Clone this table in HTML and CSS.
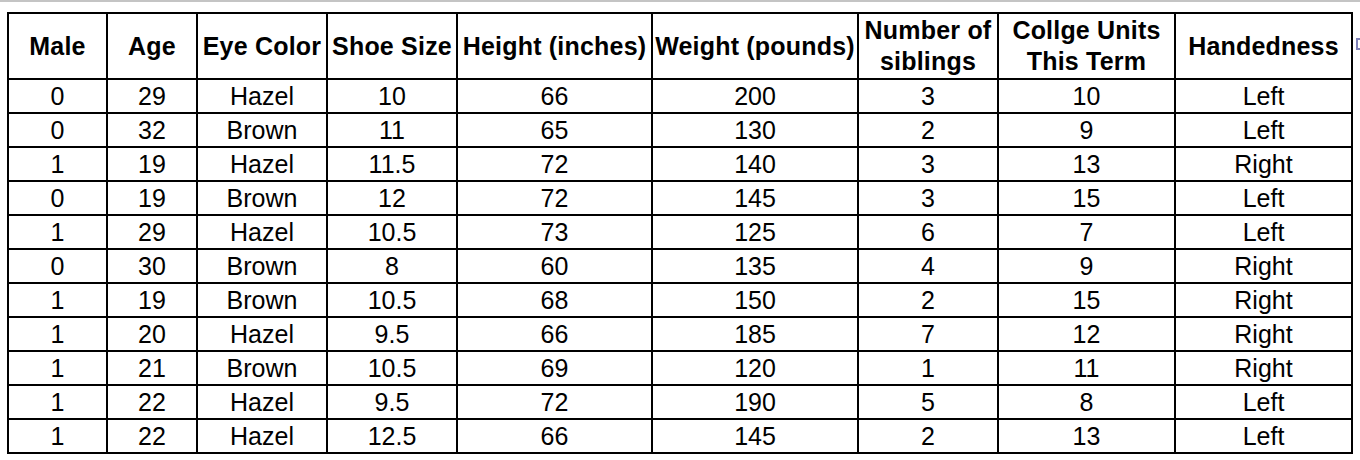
FILE: index.html
```html
<!DOCTYPE html>
<html>
<head>
<meta charset="utf-8">
<link rel="stylesheet" href="styles.css">
</head>
<body>
<div class="topbar"></div>
<div class="wrap">
<table class="data">
<colgroup>
<col class="c1"><col class="c2"><col class="c3"><col class="c4"><col class="c5"><col class="c6"><col class="c7"><col class="c8"><col class="c9">
</colgroup>
<thead>
<tr><th>Male</th><th>Age</th><th>Eye Color</th><th>Shoe Size</th><th>Height (inches)</th><th>Weight (pounds)</th><th>Number of<br>siblings</th><th>Collge Units<br>This Term</th><th>Handedness</th></tr>
</thead>
<tbody>
<tr><td>0</td><td>29</td><td>Hazel</td><td>10</td><td>66</td><td>200</td><td>3</td><td>10</td><td>Left</td></tr>
<tr><td>0</td><td>32</td><td>Brown</td><td>11</td><td>65</td><td>130</td><td>2</td><td>9</td><td>Left</td></tr>
<tr><td>1</td><td>19</td><td>Hazel</td><td>11.5</td><td>72</td><td>140</td><td>3</td><td>13</td><td>Right</td></tr>
<tr><td>0</td><td>19</td><td>Brown</td><td>12</td><td>72</td><td>145</td><td>3</td><td>15</td><td>Left</td></tr>
<tr><td>1</td><td>29</td><td>Hazel</td><td>10.5</td><td>73</td><td>125</td><td>6</td><td>7</td><td>Left</td></tr>
<tr><td>0</td><td>30</td><td>Brown</td><td>8</td><td>60</td><td>135</td><td>4</td><td>9</td><td>Right</td></tr>
<tr><td>1</td><td>19</td><td>Brown</td><td>10.5</td><td>68</td><td>150</td><td>2</td><td>15</td><td>Right</td></tr>
<tr><td>1</td><td>20</td><td>Hazel</td><td>9.5</td><td>66</td><td>185</td><td>7</td><td>12</td><td>Right</td></tr>
<tr><td>1</td><td>21</td><td>Brown</td><td>10.5</td><td>69</td><td>120</td><td>1</td><td>11</td><td>Right</td></tr>
<tr><td>1</td><td>22</td><td>Hazel</td><td>9.5</td><td>72</td><td>190</td><td>5</td><td>8</td><td>Left</td></tr>
<tr><td>1</td><td>22</td><td>Hazel</td><td>12.5</td><td>66</td><td>145</td><td>2</td><td>13</td><td>Left</td></tr>
</tbody>
</table>
<svg class="marker" width="8" height="12" viewBox="0 0 8 12"><rect x="1" y="1" width="8" height="10" fill="none" stroke="#7f82b8" stroke-width="2"/></svg>
</div>
</body>
</html>
```
FILE: styles.css
```css
html, body {
  margin: 0;
  padding: 0;
  background: #ffffff;
}
body {
  font-family: "Liberation Sans", Arial, sans-serif;
  color: #000;
  overflow: hidden;
}
.topbar {
  height: 2px;
  background: #c4c4c4;
}
.wrap {
  display: flex;
  align-items: flex-start;
  gap: 3px;
  padding: 10px 0 0 7px;
}
.data {
  border-collapse: collapse;
  table-layout: fixed;
  width: 1344px;
  flex: none;
}
.c1 { width: 99px; }
.c2 { width: 90px; }
.c3 { width: 130px; }
.c4 { width: 130px; }
.c5 { width: 195px; }
.c6 { width: 206px; }
.c7 { width: 140px; }
.c8 { width: 177px; }
.c9 { width: 177px; }
.data th, .data td {
  border: 2px solid #000;
  text-align: center;
  padding: 0;
  white-space: nowrap;
  overflow: hidden;
}
.data th {
  font-size: 25px;
  font-weight: bold;
  letter-spacing: 0.2px;
  line-height: 31px;
  height: 64px;
}
.data td {
  font-size: 25px;
  line-height: 32px;
  height: 32px;
}
.marker {
  flex: none;
  margin-top: 26px;
}
```
